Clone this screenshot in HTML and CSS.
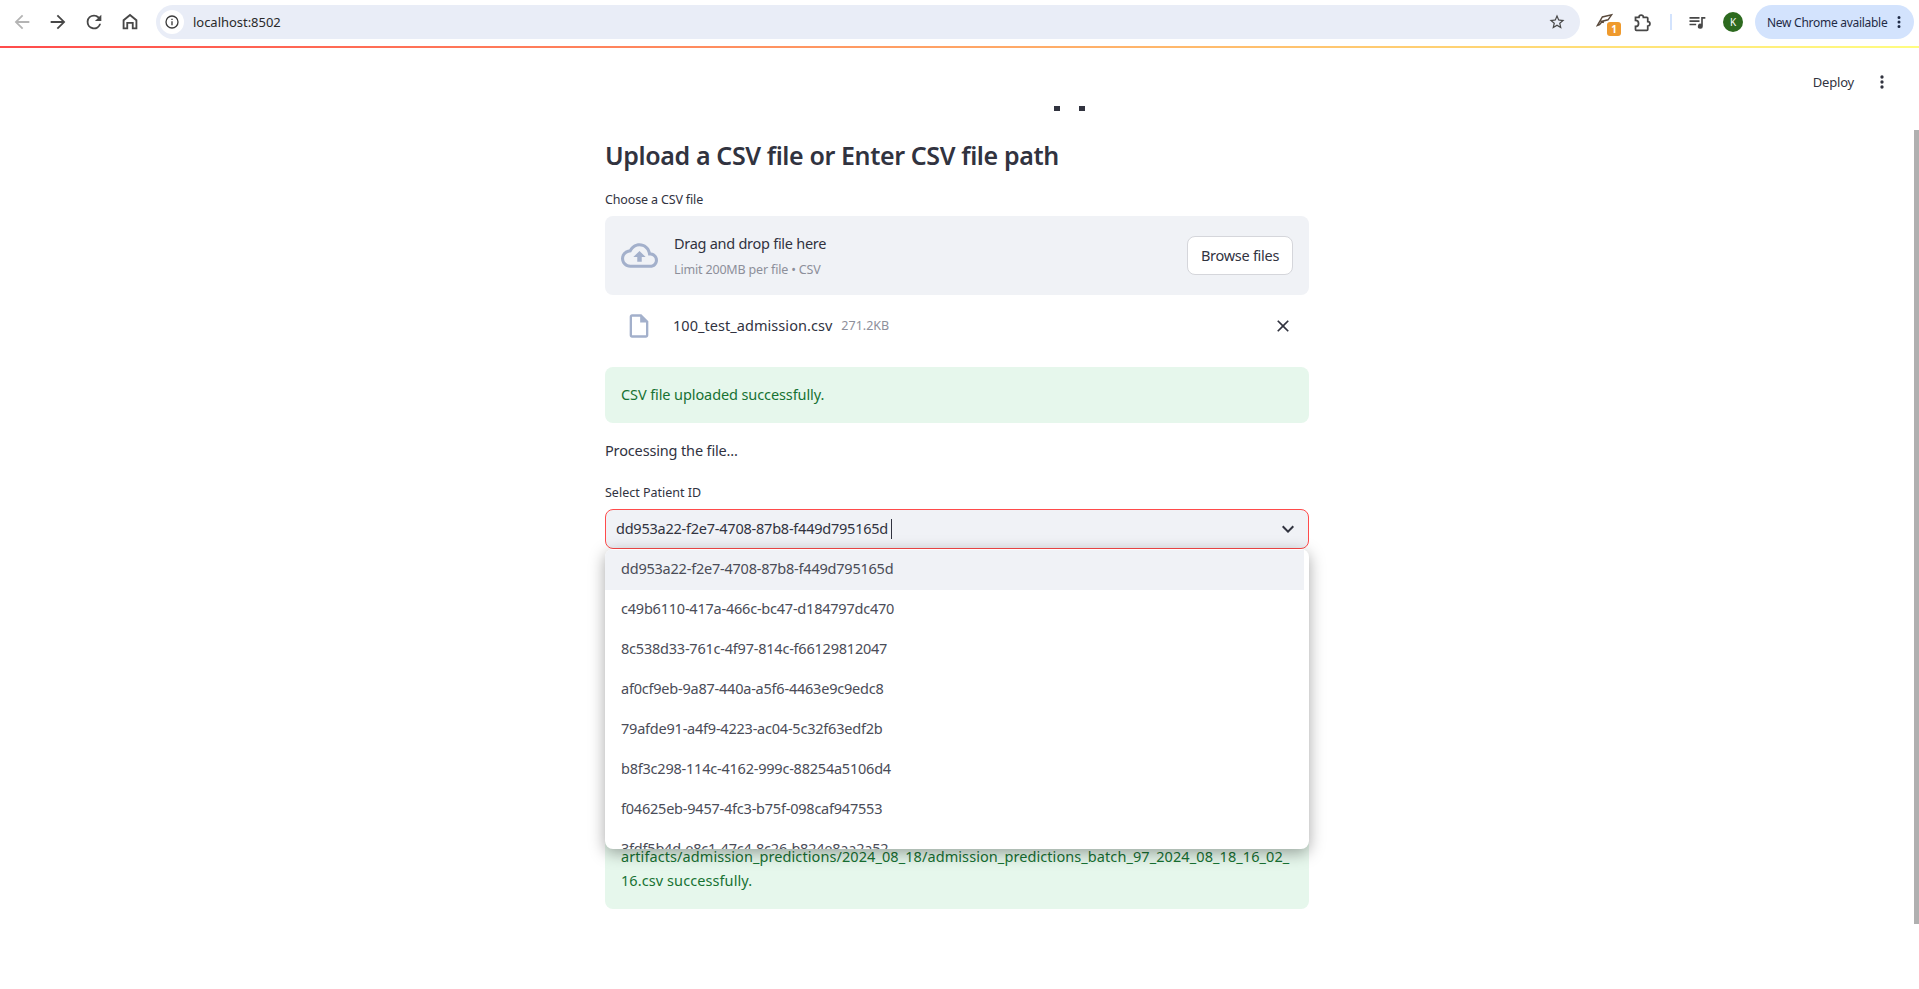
FILE: index.html
```html
<!DOCTYPE html>
<html lang="en">
<head>
<meta charset="utf-8">
<title>localhost:8502</title>
<link rel="stylesheet" href="styles.css">
</head>
<body>
<div class="chrome">
  <svg class="nav nav-first" viewBox="0 0 24 24"><path class="muted" d="M20 11H7.8l5.6-5.6L12 4l-8 8 8 8 1.4-1.4L7.8 13H20z"/></svg>
  <svg class="nav" viewBox="0 0 24 24"><path d="M12 4l-1.4 1.4 5.6 5.6H4v2h12.2l-5.6 5.6L12 20l8-8z"/></svg>
  <svg class="nav" viewBox="0 0 24 24"><path d="M17.65 6.35A7.96 7.96 0 0 0 12 4a8 8 0 1 0 7.73 10h-2.08A6 6 0 1 1 12 6c1.66 0 3.14.69 4.22 1.78L13 11h7V4z"/></svg>
  <svg class="nav" viewBox="0 0 24 24"><path d="M12 3L4 9.5V20h6v-6h4v6h6V9.5zm6 15h-2v-6H8v6H6v-7.5l6-4.8 6 4.8z"/></svg>
  <div class="omnibox">
    <span class="site-info"><svg viewBox="0 0 24 24"><path d="M11 7h2v2h-2zm0 4h2v6h-2zm1-9a10 10 0 1 0 0 20 10 10 0 0 0 0-20zm0 18a8 8 0 1 1 0-16 8 8 0 0 1 0 16z"/></svg></span>
    <span class="url">localhost:8502</span>
    <svg class="star" viewBox="0 0 24 24"><path d="M22 9.24l-7.19-.62L12 2 9.19 8.63 2 9.24l5.46 4.73L5.82 21 12 17.27 18.18 21l-1.63-7.03zM12 15.4l-3.76 2.27 1-4.28-3.32-2.88 4.38-.38L12 6.1l1.71 4.04 4.38.38-3.32 2.88 1 4.28z"/></svg>
  </div>
  <span class="ext">
    <svg viewBox="0 0 24 24"><path class="ext-line" d="M2 19L9 7l13-3-5 7-8 2-4 5zM6 12l5 3"/></svg>
    <span class="ext-badge">1</span>
  </span>
  <svg class="puzzle" viewBox="0 0 24 24"><path d="M4 6h4a2.5 2.5 0 0 1 5 0h4a1 1 0 0 1 1 1v4a2.5 2.5 0 0 1 0 5v4a1 1 0 0 1-1 1H5a1 1 0 0 1-1-1v-3.500a3 3 0 0 0 0-7z"/></svg>
  <span class="divider"></span>
  <svg class="nav media" viewBox="0 0 24 24"><path d="M3 6h12v2H3zm0 4h12v2H3zm0 4h8v2H3zm14-8h5v2h-3v9a3 3 0 1 1-2-2.8z"/></svg>
  <span class="avatar">K</span>
  <span class="update">New Chrome available<svg viewBox="0 0 24 24"><path d="M12 8a2 2 0 1 0 0-4 2 2 0 0 0 0 4zm0 2a2 2 0 1 0 0 4 2 2 0 0 0 0-4zm0 6a2 2 0 1 0 0 4 2 2 0 0 0 0-4z"/></svg></span>
</div>
<div class="decoration"></div>

<div class="app">
  <header class="app-header">
    <span class="deploy">Deploy</span>
    <svg class="kebab" viewBox="0 0 24 24"><path d="M12 8a2 2 0 1 0 0-4 2 2 0 0 0 0 4zm0 2a2 2 0 1 0 0 4 2 2 0 0 0 0-4zm0 6a2 2 0 1 0 0 4 2 2 0 0 0 0-4z"/></svg>
  </header>

  <main class="column">
    <div class="dots"><i></i><i></i></div>
    <h2 class="title">Upload a CSV file or Enter CSV file path</h2>

    <div class="label label-first">Choose a CSV file</div>
    <section class="dropzone">
      <svg class="cloud" viewBox="0 0 24 24"><path d="M19.35 10.04C18.67 6.59 15.64 4 12 4 9.11 4 6.6 5.64 5.35 8.04 2.34 8.36 0 10.91 0 14c0 3.31 2.69 6 6 6h13c2.76 0 5-2.24 5-5 0-2.64-2.05-4.78-4.65-4.96zM19 18H6c-2.21 0-4-1.79-4-4 0-2.05 1.53-3.76 3.56-3.97l1.07-.11.5-.95C8.08 7.14 9.94 6 12 6c2.62 0 4.88 1.86 5.39 4.43l.3 1.5 1.53.11c1.56.1 2.78 1.41 2.78 2.96 0 1.65-1.35 3-3 3zM8 13h2.55v3h2.9v-3H16l-4-4z"/></svg>
      <div class="drop-text">
        <div class="drop-title">Drag and drop file here</div>
        <div class="drop-limit">Limit 200MB per file • CSV</div>
      </div>
      <button class="browse">Browse files</button>
    </section>

    <div class="file-row">
      <svg class="file-icon" viewBox="0 0 24 24"><path d="M14 2H6c-1.1 0-1.99.9-1.99 2L4 20c0 1.1.89 2 1.99 2H18c1.1 0 2-.9 2-2V8l-6-6zM6 20V4h7v5h5v11H6z"/></svg>
      <span class="file-name">100_test_admission.csv</span>
      <span class="file-size">271.2KB</span>
      <svg class="file-close" viewBox="0 0 24 24"><path d="M19 6.41L17.59 5 12 10.59 6.41 5 5 6.41 10.59 12 5 17.59 6.41 19 12 13.41 17.59 19 19 17.59 13.41 12z"/></svg>
    </div>

    <div class="alert alert-upload">CSV file uploaded successfully.</div>
    <p class="processing">Processing the file...</p>

    <div class="label label-select">Select Patient ID</div>
    <div class="select">
      <div class="select-box">
        <span class="select-value">dd953a22-f2e7-4708-87b8-f449d795165d</span><span class="caret"></span>
        <svg class="chevron" viewBox="0 0 24 24"><path d="M16.59 8.59L12 13.17 7.41 8.59 6 10l6 6 6-6z"/></svg>
      </div>
      <ul class="options">
        <li class="option option-active"><span>dd953a22-f2e7-4708-87b8-f449d795165d</span></li>
        <li class="option"><span>c49b6110-417a-466c-bc47-d184797dc470</span></li>
        <li class="option"><span>8c538d33-761c-4f97-814c-f66129812047</span></li>
        <li class="option"><span>af0cf9eb-9a87-440a-a5f6-4463e9c9edc8</span></li>
        <li class="option"><span>79afde91-a4f9-4223-ac04-5c32f63edf2b</span></li>
        <li class="option"><span>b8f3c298-114c-4162-999c-88254a5106d4</span></li>
        <li class="option"><span>f04625eb-9457-4fc3-b75f-098caf947553</span></li>
        <li class="option"><span>3fdf5b4d-e8c1-47c4-8c26-b824e8aa2a52</span></li>
      </ul>
    </div>

    <div class="alert alert-saved">artifacts/admission_predictions/2024_08_18/admission_predictions_batch_97_2024_08_18_16_02_<br>16.csv successfully.</div>
  </main>

  <div class="scrollbar"></div>
</div>
</body>
</html>
```
FILE: styles.css
```css
* { box-sizing: border-box; }
html, body { margin: 0; height: 100%; overflow: hidden; background: #fff; }
body { font-family: "Noto Sans", sans-serif; color: #31333f; }

.chrome { height: 46px; display: flex; align-items: center; padding: 0 5px 2px 10px; background: #fff; }
.nav { width: 22px; height: 22px; fill: #474747; flex: none; margin-right: 14px; }
.nav-first { margin-left: 1px; }
.muted { fill: #b4b4b4; }
.omnibox { flex: 1; height: 34px; margin-left: 1px; border-radius: 17px; background: #e9edf7; display: flex; align-items: center; padding: 0 14px 0 4px; }
.site-info { width: 24px; height: 24px; border-radius: 50%; background: #fff; display: flex; align-items: center; justify-content: center; }
.site-info svg { width: 16px; height: 16px; fill: #3c3c3c; }
.url { margin-left: 9px; font-size: 13px; letter-spacing: -.03px; color: #2a2a2a; }
.star { width: 18px; height: 18px; margin-left: auto; fill: #474747; }
.ext { position: relative; width: 24px; height: 24px; margin-left: 16px; flex: none; }
.ext svg { width: 17px; height: 17px; margin-top: 2px; }
.ext-line { fill: none; stroke: #5a4a3c; stroke-width: 2; }
.ext-badge { position: absolute; right: -1px; bottom: -2px; width: 14px; height: 14px; border-radius: 3px; background: #ef9a2d; color: #fff; font-size: 10px; font-weight: 700; line-height: 14px; text-align: center; }
.puzzle { width: 21px; height: 21px; margin-left: 12px; margin-right: 17px; fill: none; stroke: #474747; stroke-width: 2; flex: none; }
.divider { width: 2px; height: 16px; background: #d3e3fd; flex: none; }
.media { margin-left: 15px; margin-right: 16px; width: 20px; height: 20px; }
.avatar { width: 20px; height: 20px; border-radius: 50%; background: #2d6a1f; color: #fff; font-size: 10px; line-height: 20px; text-align: center; flex: none; }
.update { height: 34px; width: 159px; margin-left: 12px; border-radius: 17px; background: #d3e3fd; display: flex; align-items: center; padding-left: 12px; font-size: 12px; letter-spacing: -.28px; color: #1f2b46; white-space: nowrap; flex: none; }
.update svg { width: 18px; height: 18px; margin-left: 3px; fill: #1f2b46; flex: none; }

.decoration { height: 2px; background: linear-gradient(90deg, #ff4b4b, #fffd80); }

.app { position: relative; height: 941px; overflow: hidden; }
.app-header { height: 50px; padding: 18px 27px 0 0; display: flex; justify-content: flex-end; align-items: center; gap: 18px; }
.deploy { font-size: 13px; letter-spacing: -.2px; color: #31333f; }
.kebab { width: 20px; height: 20px; fill: #31333f; }

.column { width: 704px; margin-left: 605px; }
.dots { height: 5px; margin-top: 8px; margin-left: 449px; display: flex; gap: 19px; }
.dots i { width: 6px; height: 5px; background: #31333f; }
.title { margin: 22px 0 0; font-size: 25px; font-weight: 600; line-height: 44px; letter-spacing: -.38px; color: #31333f; white-space: nowrap; }

.label { font-size: 12.5px; line-height: 20px; letter-spacing: -.15px; }
.label-first { margin-top: 13px; }
.label-select { margin-top: 21px; letter-spacing: 0; }

.dropzone { height: 79px; margin-top: 6px; padding: 0 16px; border-radius: 8px; background: #f0f2f6; display: flex; align-items: center; }
.cloud { width: 37px; height: 37px; fill: #a3b0cb; flex: none; }
.drop-text { margin-left: 16px; flex: 1; }
.drop-title { font-size: 14.5px; line-height: 22px; letter-spacing: -.27px; }
.drop-limit { font-size: 12.5px; line-height: 18px; margin-top: 7px; letter-spacing: -.17px; color: #8d8f9a; }
.browse { width: 106px; height: 39px; border: 1px solid #d5d6db; border-radius: 8px; background: #fff; color: #31333f; font: 14.5px "Noto Sans", sans-serif; letter-spacing: -.27px; padding: 0 0 2px; }

.file-row { height: 40px; margin-top: 11px; display: flex; align-items: center; padding-left: 20px; }
.file-icon { width: 28px; height: 28px; fill: #a3b0cb; flex: none; }
.file-name { margin: 0 0 2px 20px; font-size: 14.5px; letter-spacing: .05px; }
.file-size { margin: 0 0 1px 9px; font-size: 12.5px; letter-spacing: 0; color: #8d8f9a; }
.file-close { width: 20px; height: 20px; margin-left: auto; margin-right: 16px; fill: #31333f; }

.alert { border-radius: 8px; background: #e6f7ec; color: #177233; padding: 15px 16px; font-size: 14.5px; line-height: 24px; letter-spacing: -.1px; white-space: nowrap; overflow: hidden; }
.alert-upload { height: 56px; margin-top: 21px; }
.alert-saved { height: 80px; margin-top: 280px; letter-spacing: .08px; }
.processing { margin: 15px 0 0; font-size: 14.5px; line-height: 24px; letter-spacing: -.15px; }

.select { position: relative; margin-top: 6px; }
.select-box { height: 40px; padding: 0 8px 0 10px; border: 1px solid #ff4b4b; border-radius: 8px; background: #f0f2f6; display: flex; align-items: center; }
.select-value { margin-bottom: 3px; font-size: 14.5px; letter-spacing: -.23px; }
.caret { width: 1px; height: 20px; margin-left: 3px; background: #31333f; }
.chevron { width: 24px; height: 24px; margin-left: auto; fill: #31333f; }

.options { position: absolute; left: 0; right: 0; top: 100%; height: 300px; margin: 0; padding: 0 5px 0 0; list-style: none; overflow: hidden; background: #fff; border-radius: 8px; box-shadow: 0 4px 16px rgba(0,0,0,.35); z-index: 2; }
.option { height: 40px; padding: 0 0 5px 16px; display: flex; align-items: center; font-size: 14.5px; letter-spacing: -.22px; color: #4a4c57; }
.option-active { background: #f0f2f6; margin-top: 1px; }

.scrollbar { position: absolute; right: 0; top: 82px; height: 794px; width: 5px; background: #b0b0b0; }
```
